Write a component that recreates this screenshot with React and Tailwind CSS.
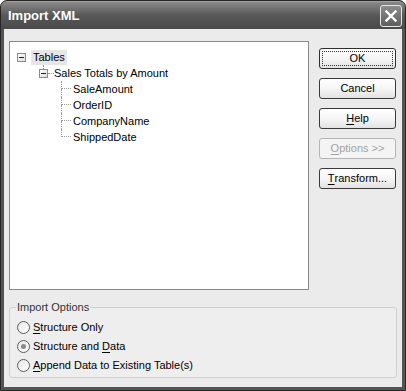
import React from 'react'

function MinusBox({ size = 9 }) {
  return (
    <div
      className={`${size === 9 ? 'w-[9px] h-[9px]' : 'w-[8px] h-[8px]'} shrink-0 border border-[#8c8c8c] bg-gradient-to-br from-white to-[#dcdcdc] flex items-center justify-center`}
    >
      <div className="w-[5px] h-px bg-[#222]" />
    </div>
  )
}

function Mn({ children }) {
  return <span className="underline underline-offset-[2px] decoration-[1px]">{children}</span>
}

function Btn({ children, disabled, isDefault }) {
  return (
    <button
      className={`w-[77px] h-[21px] rounded-[3px] border flex items-center justify-center p-[2px] ${
        disabled
          ? 'border-[#b5b5b5] text-[#a3a3a3] bg-[#f4f4f4]'
          : isDefault
            ? 'border-[#2e2e2e] text-black bg-gradient-to-b from-white via-[#f6f6f6] to-[#e2e2e2]'
            : 'border-[#3a3a3a] text-black bg-gradient-to-b from-white via-[#f6f6f6] to-[#e2e2e2]'
      }`}
    >
      <span
        className={`w-full h-full flex items-center justify-center leading-none ${
          isDefault ? 'border border-dotted border-[#333]' : ''
        }`}
      >
        {children}
      </span>
    </button>
  )
}

function ChildRow({ label, last }) {
  return (
    <div className="h-4 flex items-center">
      <div className="w-[51px] shrink-0" />
      <div className="w-[10px] h-4 flex flex-col shrink-0">
        <div className="h-[8px] border-l border-b border-dotted border-[#9a9a9a]" />
        <div className={`h-[8px] ${last ? '' : 'border-l border-dotted border-[#9a9a9a]'}`} />
      </div>
      <span className="ml-[2px]">{label}</span>
    </div>
  )
}

function Radio({ checked, children }) {
  return (
    <div className="h-[19px] flex items-center gap-[3px]">
      <div className="w-[13px] h-[13px] rounded-full border border-[#5c5c5c] bg-gradient-to-br from-[#e6e6e6] to-white flex items-center justify-center shrink-0">
        {checked && <div className="w-[5px] h-[5px] rounded-full bg-[#8a8a8a]" />}
      </div>
      <span>{children}</span>
    </div>
  )
}

export default function App() {
  return (
    <div className="w-[406px] h-[391px] flex flex-col bg-[#545454] border border-[#262626] rounded-t-[7px] font-['Liberation_Sans',Arial,sans-serif] text-[11px] text-black overflow-hidden">
      <div className="h-[28px] shrink-0 rounded-t-[6px] bg-gradient-to-b from-[#8a8a8a] via-[#585858] to-[#494949] flex items-center pl-[7px] pr-[3px] border-t border-[#a0a0a0]">
        <span className="flex-1 text-white font-bold text-[13px]">Import XML</span>
        <div className="w-[22px] h-[22px] rounded-[3px] border border-[#e8e8e8] bg-gradient-to-b from-[#8c8c8c] to-[#5e5e5e] flex items-center justify-center">
          <svg width="12" height="12" viewBox="0 0 12 12">
            <path d="M1.5 1.5 L10.5 10.5 M10.5 1.5 L1.5 10.5" stroke="white" strokeWidth="2.4" strokeLinecap="square" />
          </svg>
        </div>
      </div>

      <div className="flex-1 mx-[3px] mb-[3px] bg-[#ebebeb] flex flex-col px-[5px] pt-[12px]">
        <div className="flex">
          <div className="w-[300px] h-[249px] border border-[#8a8a8a] bg-white pt-[7px] pl-[7px]">
            <div className="h-4 flex items-center">
              <MinusBox />
              <span className="ml-[5px] bg-[#e6e6e6] px-[2px] h-[15px] flex items-center">Tables</span>
            </div>
            <div className="h-4 flex items-center">
              <div className="w-[22px] shrink-0" />
              <div className="w-[9px] h-4 flex flex-col items-center shrink-0">
                <div className="h-[4px] border-l border-dotted border-[#9a9a9a]" />
                <MinusBox />
              </div>
              <div className="w-[6px] border-b border-dotted border-[#9a9a9a] self-center mt-[1px]" />
              <span>Sales Totals by Amount</span>
            </div>
            <div className="-ml-[7px]">
              <ChildRow label="SaleAmount" />
              <ChildRow label="OrderID" />
              <ChildRow label="CompanyName" />
              <ChildRow label="ShippedDate" last />
            </div>
          </div>

          <div className="ml-[10px] mt-[7px] flex flex-col gap-[9px]">
            <Btn isDefault>OK</Btn>
            <Btn>Cancel</Btn>
            <Btn>
              <Mn>H</Mn>elp
            </Btn>
            <Btn disabled>
              <Mn>O</Mn>ptions &gt;&gt;
            </Btn>
            <Btn>
              <Mn>T</Mn>ransform...
            </Btn>
          </div>
        </div>

        <fieldset className="mt-[11px] border border-[#cfcfcf] rounded-[3px] bg-[#eeeeee] pl-[7px] pt-[4px] pb-[2px]">
          <legend className="px-[1px] -ml-[1px] leading-[13px] text-[#333]">Import Options</legend>
          <Radio>
            <Mn>S</Mn>tructure Only
          </Radio>
          <Radio checked>
            Structure and <Mn>D</Mn>ata
          </Radio>
          <Radio>
            <Mn>A</Mn>ppend Data to Existing Table(s)
          </Radio>
        </fieldset>
      </div>
    </div>
  )
}
